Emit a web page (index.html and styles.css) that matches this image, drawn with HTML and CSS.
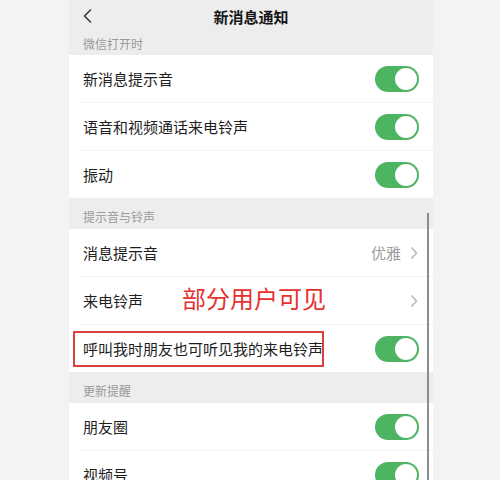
FILE: index.html
```html
<!DOCTYPE html>
<html lang="zh-CN">
<head>
  <meta charset="UTF-8">
  <meta name="viewport" content="width=device-width, initial-scale=1.0">
  <title>新消息通知</title>
  <link rel="stylesheet" href="styles.css">
</head>
<body>
  <div class="phone">
    <div class="header">
      <svg class="back" width="12" height="16" viewBox="0 0 12 16">
        <path d="M9 1.5 L2.5 8 L9 14.5" fill="none" stroke="#333" stroke-width="1.5"/>
      </svg>
      <div class="title">新消息通知</div>
    </div>

    <div class="label first">微信打开时</div>
    <div class="group">
      <div class="row">
        <span class="text">新消息提示音</span>
        <span class="switch"></span>
      </div>
      <div class="row">
        <span class="text">语音和视频通话来电铃声</span>
        <span class="switch"></span>
      </div>
      <div class="row">
        <span class="text">振动</span>
        <span class="switch"></span>
      </div>
    </div>

    <div class="label">提示音与铃声</div>
    <div class="group">
      <div class="row">
        <span class="text">消息提示音</span>
        <span class="value">优雅</span>
        <svg class="arrow" width="8" height="14" viewBox="0 0 8 14">
          <path d="M1.5 1.5 L6.5 7 L1.5 12.5" fill="none" stroke="#b3b3b3" stroke-width="1.4"/>
        </svg>
      </div>
      <div class="row">
        <span class="text">来电铃声</span>
        <span class="note">部分用户可见</span>
        <svg class="arrow" width="8" height="14" viewBox="0 0 8 14">
          <path d="M1.5 1.5 L6.5 7 L1.5 12.5" fill="none" stroke="#b3b3b3" stroke-width="1.4"/>
        </svg>
      </div>
      <div class="row">
        <span class="text">呼叫我时朋友也可听见我的来电铃声</span>
        <span class="redbox"></span>
        <span class="switch"></span>
      </div>
    </div>

    <div class="label">更新提醒</div>
    <div class="group">
      <div class="row">
        <span class="text">朋友圈</span>
        <span class="switch"></span>
      </div>
      <div class="row">
        <span class="text">视频号</span>
        <span class="switch"></span>
      </div>
    </div>

    <div class="scrollbar"></div>
  </div>
</body>
</html>
```

FILE: styles.css
```css
body {
  margin: 0;
  padding: 0;
  background: #f3f3f3;
  font-family: "Noto Sans CJK SC", "Noto Sans", sans-serif;
  overflow: hidden;
}

.phone {
  position: relative;
  width: 364px;
  height: 480px;
  margin-left: 69px;
  background: #ededed;
  overflow: hidden;
}

.header {
  height: 33px;
  display: flex;
  align-items: center;
  justify-content: center;
  position: relative;
}

.back {
  position: absolute;
  left: 13px;
  top: 8px;
}

.title {
  font-size: 15px;
  font-weight: bold;
  color: #151515;
  margin-top: -1px;
}

.label {
  height: 31px;
  box-sizing: border-box;
  padding: 0 0 4px 14px;
  display: flex;
  align-items: flex-end;
  font-size: 12px;
  color: #9a9a9a;
}

.label.first {
  height: 22px;
  padding-bottom: 3px;
}

.group {
  background: #fff;
}

.row {
  position: relative;
  height: 47px;
  display: flex;
  align-items: center;
  padding: 0 14px 0 3px;
  margin-left: 11px;
  border-top: 1px solid #f3f3f3;
}

.row:first-child {
  border-top: none;
}

.text {
  flex: 1;
  font-size: 15px;
  color: #1e1e1e;
}

.value {
  font-size: 15px;
  color: #9c9c9c;
  margin-right: 9px;
}

.arrow {
  margin-right: 1px;
}

.switch {
  position: relative;
  width: 44px;
  height: 26px;
  border-radius: 13px;
  background: #4db462;
}

.switch::after {
  content: "";
  position: absolute;
  right: 2px;
  top: 2px;
  width: 22px;
  height: 22px;
  border-radius: 50%;
  background: #fff;
}

.note {
  position: absolute;
  left: 102px;
  top: 3px;
  font-size: 24px;
  color: #e5312f;
}

.redbox {
  position: absolute;
  left: -7px;
  top: 6px;
  width: 247px;
  height: 32px;
  border: 2px solid #d8403b;
}

.scrollbar {
  position: absolute;
  left: 358px;
  top: 213px;
  width: 2px;
  height: 280px;
  background: #8c8c8c;
}
```
